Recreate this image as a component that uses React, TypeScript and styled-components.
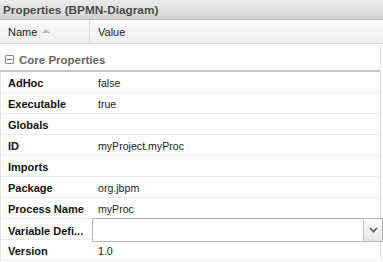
import styled, { createGlobalStyle } from 'styled-components';

const GlobalStyle = createGlobalStyle`
  html, body {
    margin: 0;
    padding: 0;
    background: #fff;
  }
  body {
    font-family: "Liberation Sans", Arial, sans-serif;
  }
`;

const Panel = styled.div`
  width: 383px;
  height: 262px;
  overflow: hidden;
  background: #fff;
`;

const TitleBar = styled.div`
  height: 19px;
  padding-left: 3px;
  display: flex;
  align-items: center;
  font-weight: bold;
  font-size: 11.8px;
  color: #4a4a4a;
  background: linear-gradient(#ebebeb, #e0e0e0 55%, #cfcfcf);
  border-bottom: 1px solid #c4c4c4;
`;

const HeaderRow = styled.div`
  display: grid;
  grid-template-columns: 90px 1fr;
  height: 23px;
  background: linear-gradient(#fafafa, #efefef);
  border-bottom: 1px solid #d6d6d6;
`;

const HeaderCell = styled.div<{ $divider?: boolean }>`
  display: flex;
  align-items: center;
  gap: 5px;
  padding-left: 8px;
  font-size: 11px;
  color: #222;
  border-right: ${({ $divider }) => ($divider ? '1px solid #dcdcdc' : 'none')};
`;

const SortArrow = styled.span`
  width: 0;
  height: 0;
  border-left: 4px solid transparent;
  border-right: 4px solid transparent;
  border-bottom: 4px solid #bbb;
  margin-top: -1px;
`;

const Body = styled.div`
  border-right: 1px solid #e4e4e4;
  margin-right: 2px;
`;

const GroupRow = styled.div`
  display: flex;
  align-items: center;
  gap: 5px;
  height: 21px;
  padding: 5px 0 0 5px;
  border-bottom: 2px solid #c4c4c4;
  font-weight: bold;
  font-size: 11.5px;
  color: #666;
`;

const Toggle = styled.span`
  width: 7px;
  height: 7px;
  border: 1px solid #888;
  border-radius: 1px;
  position: relative;
  &::after {
    content: '';
    position: absolute;
    left: 1px;
    right: 1px;
    top: 3px;
    height: 1px;
    background: #666;
  }
`;

const Row = styled.div`
  display: grid;
  grid-template-columns: 90px 1fr;
  height: 20px;
  border-bottom: 1px solid #ececec;
  border-left: 1px solid #e4e4e4;
`;

const Label = styled.div`
  display: flex;
  align-items: center;
  padding: 1px 0 0 7px;
  font-weight: bold;
  font-size: 11px;
  color: #111;
  white-space: nowrap;
`;

const Value = styled.div`
  display: flex;
  align-items: center;
  padding: 1px 0 0 7px;
  font-size: 10.6px;
  color: #222;
`;

const Combo = styled.div`
  display: flex;
  align-items: stretch;
  margin: -1px -3px 0 1px;
  height: 22px;
  border: 1px solid #b5b5b5;
  background: linear-gradient(#f2f2f2, #fff 4px);
`;

const ComboInput = styled.div`
  flex: 1;
`;

const ComboButton = styled.div`
  width: 18px;
  display: flex;
  align-items: center;
  justify-content: center;
  border-left: 1px solid #c8c8c8;
  background: linear-gradient(#fbfbfb, #e6e6e6);
`;

interface Prop {
  name: string;
  value?: string;
  combo?: boolean;
}

const props: Prop[] = [
  { name: 'AdHoc', value: 'false' },
  { name: 'Executable', value: 'true' },
  { name: 'Globals' },
  { name: 'ID', value: 'myProject.myProc' },
  { name: 'Imports' },
  { name: 'Package', value: 'org.jbpm' },
  { name: 'Process Name', value: 'myProc' },
  { name: 'Variable Defi...', combo: true },
  { name: 'Version', value: '1.0' },
];

export default function App() {
  return (
    <>
      <GlobalStyle />
      <Panel>
        <TitleBar>Properties (BPMN-Diagram)</TitleBar>
        <HeaderRow>
          <HeaderCell $divider>
            Name <SortArrow />
          </HeaderCell>
          <HeaderCell>Value</HeaderCell>
        </HeaderRow>
        <Body>
          <GroupRow>
            <Toggle />
            Core Properties
          </GroupRow>
          {props.map(p => (
            <Row key={p.name}>
              <Label>{p.name}</Label>
              {p.combo ? (
                <Combo>
                  <ComboInput />
                  <ComboButton>
                    <svg width="9" height="6" viewBox="0 0 9 6">
                      <path d="M1 1 L4.5 4.5 L8 1" stroke="#555" strokeWidth="1.6" fill="none" />
                    </svg>
                  </ComboButton>
                </Combo>
              ) : (
                <Value>{p.value}</Value>
              )}
            </Row>
          ))}
        </Body>
      </Panel>
    </>
  );
}
